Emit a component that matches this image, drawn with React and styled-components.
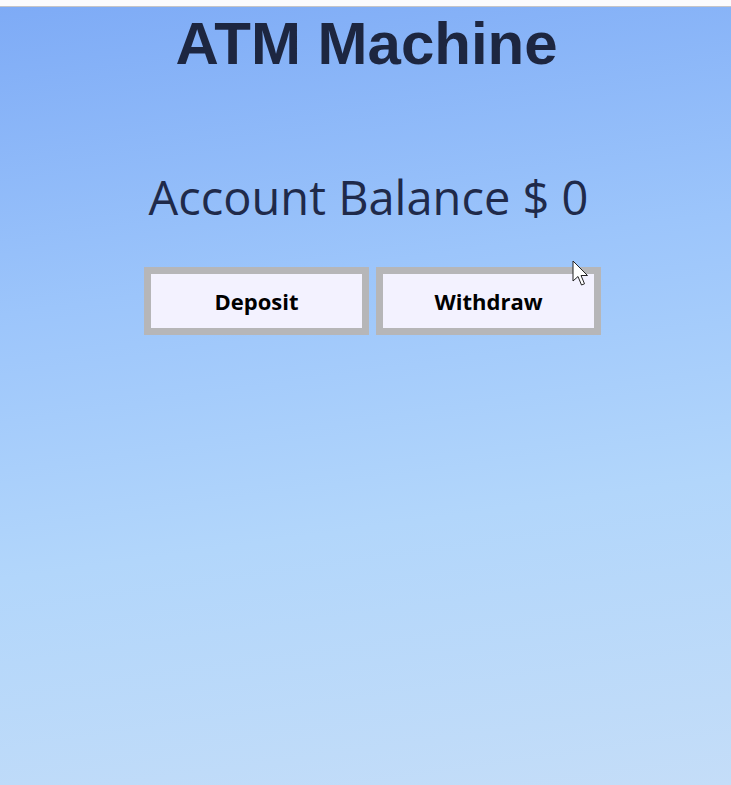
import React, { useState } from 'react';
import styled, { createGlobalStyle } from 'styled-components';

const GlobalStyle = createGlobalStyle`
  html, body {
    margin: 0;
    padding: 0;
    height: 100%;
  }
  body {
    font-family: 'Open Sans', 'Noto Sans', sans-serif;
  }
  #root {
    min-height: 100%;
  }
`;

const Page = styled.div`
  position: relative;
  min-height: 785px;
  display: flex;
  flex-direction: column;
  background: #ffffff;
`;

const TopStrip = styled.div`
  height: 6px;
  background: #fbfbfd;
  border-bottom: 1px solid #c4c4c8;
`;

const Screen = styled.main`
  flex: 1;
  display: flex;
  flex-direction: column;
  align-items: center;
  background: linear-gradient(172deg, #7eabf6 0%, #9cc5fb 35%, #b2d6fb 65%, #c4ddf8 100%);
`;

const Title = styled.h1`
  margin: 2px 0 0 2px;
  font-family: 'Liberation Sans', Arial, sans-serif;
  font-weight: 700;
  font-size: 60px;
  line-height: 70px;
  color: #1d2640;
`;

const Balance = styled.h2`
  margin: 88px 0 0 6px;
  font-family: 'Open Sans', 'Noto Sans', sans-serif;
  font-weight: 500;
  font-size: 47px;
  line-height: 60px;
  color: #1f2a4a;
`;

const Actions = styled.div`
  margin: 40px 0 0 14px;
  display: flex;
  gap: 7px;
`;

const ActionButton = styled.button`
  width: 225px;
  height: 68px;
  border: 7px solid #b6b6b8;
  background: #f3f2ff;
  font-family: 'Open Sans', 'Noto Sans', sans-serif;
  font-weight: 700;
  font-size: 22px;
  color: #000;
  cursor: pointer;
`;

const Pointer = styled.svg`
  position: absolute;
  left: 572px;
  top: 260px;
  pointer-events: none;
`;

export default function App() {
  const [balance, setBalance] = useState(0);

  return (
    <>
      <GlobalStyle />
      <Page>
        <TopStrip />
        <Screen>
          <Title>ATM Machine</Title>
          <Balance>Account Balance $ {balance}</Balance>
          <Actions>
            <ActionButton onClick={() => setBalance(balance + 10)}>Deposit</ActionButton>
            <ActionButton onClick={() => setBalance(Math.max(0, balance - 10))}>Withdraw</ActionButton>
          </Actions>
        </Screen>
        <Pointer width="18" height="28" viewBox="0 0 18 28">
          <path d="M1 1 L1 21 L6 16.5 L9.5 25 L12.5 23.8 L9 15.5 L15.5 15.5 Z" fill="#fff" stroke="#222" strokeWidth="1" strokeLinejoin="round" />
        </Pointer>
      </Page>
    </>
  );
}
